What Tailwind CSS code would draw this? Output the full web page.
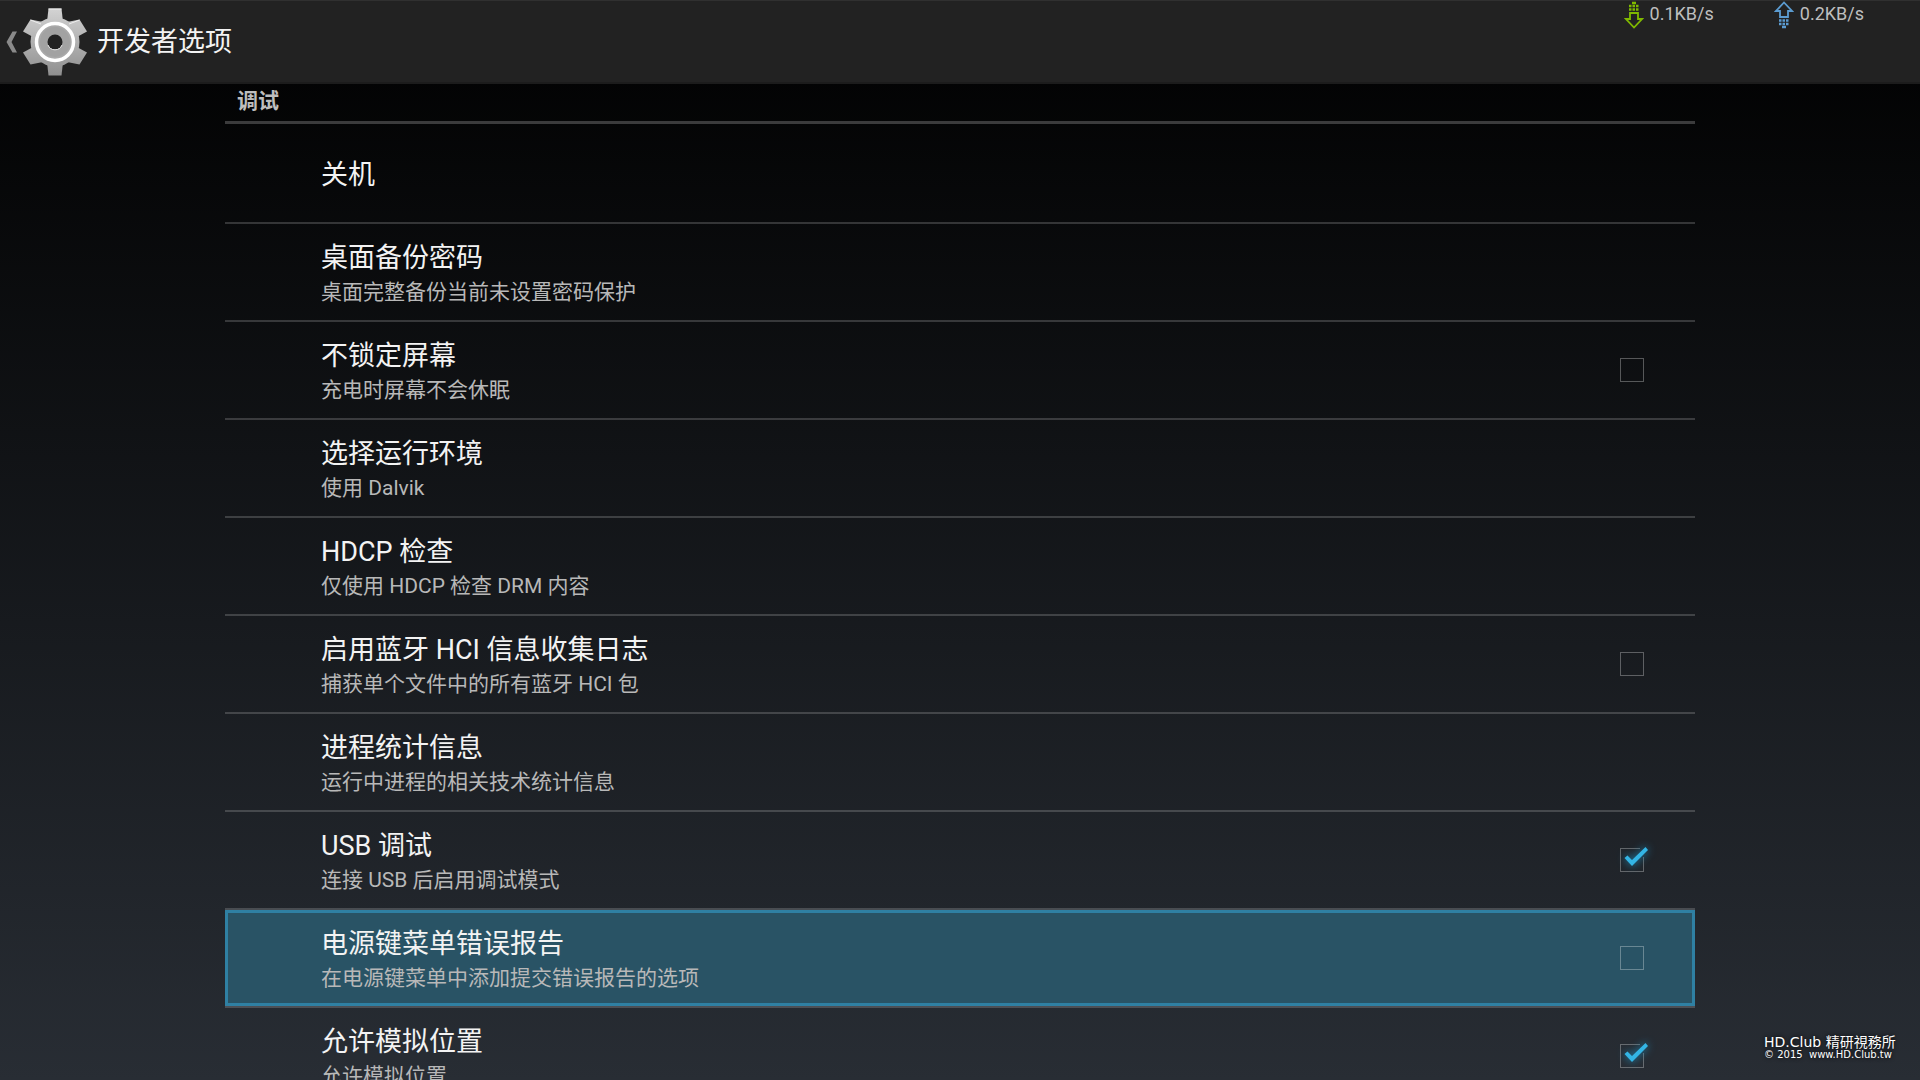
<!DOCTYPE html>
<html lang="zh-CN">

<head>
    <meta charset="UTF-8">
    <meta name="viewport" content="width=device-width, initial-scale=1.0">
    <title>开发者选项</title>
    <script src="https://cdn.jsdelivr.net/npm/@tailwindcss/browser@4"></script>
</head>

<body class="h-screen overflow-hidden flex flex-col bg-linear-to-b/srgb from-black to-[#282d34] text-[#f3f3f3] font-[Roboto,'Noto_Sans_CJK_SC',sans-serif]">

    <!-- Action bar -->
    <header class="h-21 shrink-0 flex items-start justify-between bg-[#222222] border-t border-t-[#303030] border-b-2 border-b-[#1c1c1c]">
        <button class="h-full flex items-center pl-1.5 text-[27px] leading-9">
            <svg class="w-3 h-6" viewBox="0 0 12 24" fill="#8a8a8a">
                <path d="M6.5 1.500H11L5.500 12 11 22.500H6.500L.5 12z" />
            </svg>
            <svg class="w-[70px] h-[70px] ml-0.5" viewBox="-35 -35 70 70">
                <defs>
                    <linearGradient id="metal" x1="0" y1="-34" x2="0" y2="34" gradientUnits="userSpaceOnUse">
                        <stop offset="0" stop-color="#d4d4d4" />
                        <stop offset="1" stop-color="#8e8e8e" />
                    </linearGradient>
                </defs>
                <g fill="url(#metal)">
                    <circle r="24.500" />
                    <path d="M-6.500-33.500H6.500L8-20H-8z" />
                    <path d="M-6.500 33.500H6.500L8 20H-8z" />
                    <path d="M24.500-22.500L32-10.500 20-4 12-20z" />
                    <path d="M-24.500-22.500L-32-10.500-20-4-12-20z" />
                    <path d="M24.500 22.500L32 10.500 20 4 12 20z" />
                    <path d="M-24.500 22.500L-32 10.500-20 4-12 20z" />
                </g>
                <path d="M-6.500-33H6.500M-24.500-22L-14-18M24.500-22L14-18" stroke="#ededed" stroke-width="1" />
                <circle r="18.500" fill="#a9a9a9" stroke="#fff" stroke-width="3.500" />
                <circle r="15" fill="#a2a2a2" />
                <circle r="7.500" fill="#222222" />
                <path d="M-7 3A7.500 7.500 0 0 0 7 3" fill="none" stroke="#e2e2e2" stroke-width="1" />
            </svg>
            <span class="ml-[7px]">开发者选项</span>
        </button>

        <div class="flex gap-[60px] pr-14 text-lg leading-[25px] text-[#bebebe]">
            <div class="flex gap-1.5">
                <svg class="w-5 h-7" viewBox="0 0 20 28" fill="none" stroke="#7fb800" stroke-width="1.800">
                    <path d="M6 12V18H2L10 26.500 18 18H14V12z" />
                    <path d="M5 8.500H15M5 5H15" stroke-width="2.500" stroke-dasharray="2.500 1" />
                    <path d="M8 2H12" stroke-width="2.500" />
                </svg>
                <span>0.1KB/s</span>
            </div>
            <div class="flex gap-1.5">
                <svg class="w-5 h-7" viewBox="0 0 20 28" fill="none" stroke="#5b9bd0" stroke-width="1.800">
                    <path d="M6 16V10H2L10 1.500 18 10H14V16z" />
                    <path d="M5 19.500H15M5 23H15" stroke-width="2.500" stroke-dasharray="2.500 1" />
                    <path d="M8 26H12" stroke-width="2.500" />
                </svg>
                <span>0.2KB/s</span>
            </div>
        </div>
    </header>

    <!-- Preference list -->
    <main class="flex-1 min-h-0 overflow-hidden px-[225px]">
        <h2 class="h-10 border-b-3 border-white/22 pl-3 text-[21px] leading-[34px] font-bold text-[#bebebe]">调试</h2>
        <ul id="prefs"></ul>
    </main>

    <!-- Watermark -->
    <footer class="absolute right-5 bottom-5 w-34 text-white text-shadow-[0_0_4px_#000] whitespace-nowrap">
        <p class="text-sm leading-[15px] font-['DejaVu_Sans','Noto_Sans_CJK_TC',sans-serif]">HD.Club 精研視務所</p>
        <p class="text-[10px] leading-[10px] font-['DejaVu_Sans',sans-serif]">© 2015&nbsp; www.HD.Club.tw</p>
    </footer>

    <script>
        // checked is left out for rows without a tick box
        const prefs = [
            { title: '关机' },
            { title: '桌面备份密码', summary: '桌面完整备份当前未设置密码保护' },
            { title: '不锁定屏幕', summary: '充电时屏幕不会休眠', checked: false },
            { title: '选择运行环境', summary: '使用 Dalvik' },
            { title: 'HDCP 检查', summary: '仅使用 HDCP 检查 DRM 内容' },
            { title: '启用蓝牙 HCI 信息收集日志', summary: '捕获单个文件中的所有蓝牙 HCI 包', checked: false },
            { title: '进程统计信息', summary: '运行中进程的相关技术统计信息' },
            { title: 'USB 调试', summary: '连接 USB 后启用调试模式', checked: true },
            { title: '电源键菜单错误报告', summary: '在电源键菜单中添加提交错误报告的选项', checked: false, focused: true },
            { title: '允许模拟位置', summary: '允许模拟位置', checked: true }
        ];

        const list = document.getElementById('prefs');

        prefs.forEach((pref, i) => {
            const hasBox = pref.checked !== undefined;
            const tag = hasBox ? 'label' : 'button';
            const height = pref.summary ? 'h-24' : 'h-[98px]';
            const focus = pref.focused ? 'bg-[#295365] outline-3 -outline-offset-3 outline-[#2f80a3]' : '';

            const text = `
                <span class="flex-1 flex flex-col pt-1">
                    <span class="text-[27px] leading-9">${pref.title}</span>
                    ${pref.summary ? `<span class="text-[21px] leading-8 text-[#b8b8b8]">${pref.summary}</span>` : ''}
                </span>`;

            const box = hasBox ? `
                <span class="relative size-6">
                    <input type="checkbox" id="pref${i}" ${pref.checked ? 'checked' : ''}
                        class="peer block size-6 appearance-none border border-white/30 checked:[clip-path:polygon(0_0,20px_0,20px_9px,100%_9px,100%_100%,0_100%)]">
                    <svg class="hidden peer-checked:block absolute inset-0 size-6 overflow-visible drop-shadow-[0_0_4px_#1c8fc0]" viewBox="0 0 24 24" fill="#33b5e5">
                        <path d="M4.500 10L7.500 7.500 12 12 25.500-1 28 2 12 18z" />
                    </svg>
                </span>` : '';

            const li = document.createElement('li');
            li.className = 'border-b-2 border-white/18';
            li.innerHTML = `<${tag} ${hasBox ? `for="pref${i}"` : ''} class="w-full ${height} flex items-center pl-24 pr-[51px] text-left ${focus}">${text}${box}</${tag}>`;
            list.appendChild(li);
        });
    </script>

</body>

</html>
